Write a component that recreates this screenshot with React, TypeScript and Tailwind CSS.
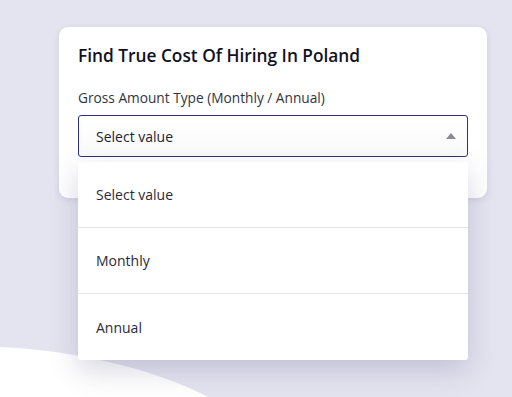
import { useState } from "react";

const options = ["Select value", "Monthly", "Annual"];

export default function App() {
  const [value] = useState("Select value");

  return (
    <div
      className="relative w-[512px] h-[397px] overflow-hidden bg-[#e4e4f0]"
      style={{ fontFamily: "'Open Sans', 'Noto Sans', sans-serif" }}
    >
      {/* background wave */}
      <svg className="absolute left-0 bottom-0" width="512" height="60" viewBox="0 0 512 60">
        <path d="M0 10 C 70 13, 150 30, 208 60 L 0 60 Z" fill="#ffffff" />
      </svg>

      <div className="relative pt-[27px] pl-[59px]">
        <div className="w-[428px] h-[171px] bg-white rounded-[9px] shadow-[0_2px_6px_rgba(60,60,110,0.12)] px-[19px] pt-[18px]">
          <h1 className="text-[17.3px] font-semibold text-[#111122] leading-[22px]">
            Find True Cost Of Hiring In Poland
          </h1>
          <label className="block mt-[22px] text-[13.7px] text-[#333340] leading-[18px]">
            Gross Amount Type (Monthly / Annual)
          </label>
          <div className="relative mt-[8px]">
            <div className="h-[42px] border border-[#2e2e86] rounded-[3px] flex items-center justify-between pl-[17px] pr-[10px] bg-gradient-to-b from-white to-[#fafafa]">
              <span className="text-[14px] text-[#222230]">{value}</span>
              <svg width="10" height="6" viewBox="0 0 10 6" className="mr-[1px]">
                <path d="M0 6 L5 0 L10 6 Z" fill="#8a8a8f" />
              </svg>
            </div>

            {/* open dropdown */}
            <div className="absolute left-0 top-[47px] w-[390px] bg-white rounded-b-[3px] shadow-[0_10px_28px_rgba(70,70,120,0.22)] z-10">
              {options.map((o, i) => (
                <div
                  key={o}
                  className={`h-[66px] flex items-center pl-[18px] text-[14px] text-[#2a2a38] ${
                    i < options.length - 1 ? "border-b border-[#e4e4ea]" : ""
                  }`}
                >
                  {o}
                </div>
              ))}
            </div>
          </div>
        </div>
      </div>
    </div>
  );
}
